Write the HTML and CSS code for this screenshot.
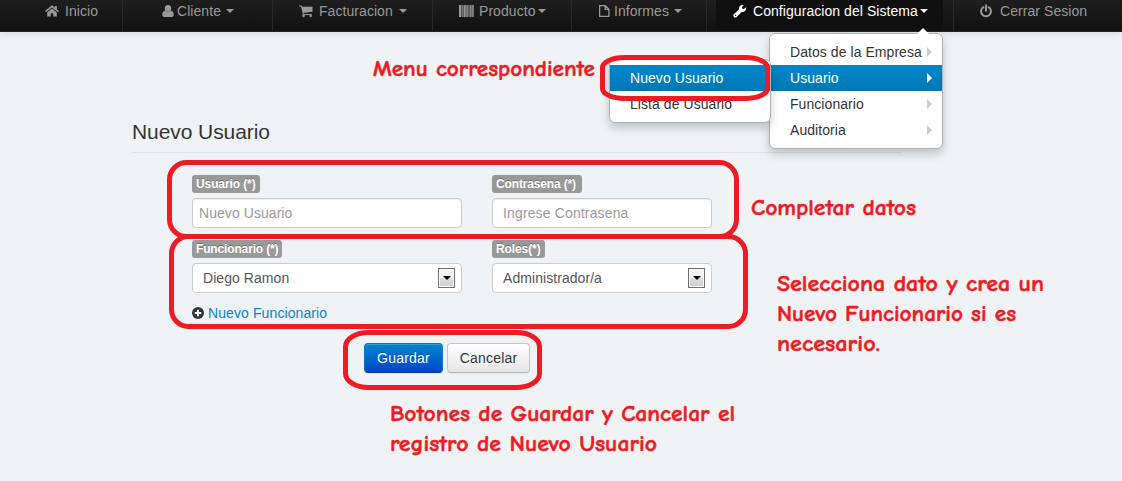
FILE: index.html
```html
<!DOCTYPE html>
<html lang="es">
<head>
<meta charset="utf-8">
<title>Nuevo Usuario</title>
<link rel="stylesheet" href="styles.css">
</head>
<body>
<nav class="navbar">
  <a class="nav-item nav-home"><svg class="icon" viewBox="0 0 14 14"><path d="M7 4.400 2.200 8.400V12.500H5.800V9.300h2.400v3.200h3.600V8.400zM7 1.200 0 7.100l1 1.200L7 3.400l6 4.900 1-1.200-2.100-1.700V2H9.800v1.600z"/></svg><span>Inicio</span></a>
  <a class="nav-item nav-client"><svg class="icon" viewBox="0 0 12 14"><path d="M6 1a3.200 3.400 0 1 1 0 6.800A3.200 3.400 0 0 1 6 1M3 6.700C1 6.900.3 8.500.3 11c0 1.300.8 2 2 2h7.400c1.200 0 2-.7 2-2 0-2.500-.7-4.100-2.700-4.300C7.500 8.500 4.500 8.500 3 6.700"/></svg><span>Cliente</span><i class="caret"></i></a>
  <a class="nav-item nav-billing"><svg class="icon" viewBox="0 0 14 14"><path d="M0 1.500h2.800l.4 1.300H13.500v5L4.500 9l.2.900h8v1.100H3.600L3.700 9.500 2 2.600H0z"/><circle cx="4.600" cy="12" r="1.200"/><circle cx="11.700" cy="12" r="1.200"/></svg><span>Facturacion</span><i class="caret"></i></a>
  <a class="nav-item nav-product"><svg class="icon" viewBox="0 0 15 14"><path d="M0 1h2v12H0zm2.600 0h1.200v12H2.600zm1.900 0h2.200v12H4.500zm2.800 0h1.500v12H7.300zm2.200 0h1v12h-1zm1.600 0h1.500v12h-1.500zm2.100 0h1.500v12h-1.500z"/></svg><span>Producto</span><i class="caret"></i></a>
  <a class="nav-item nav-reports"><svg class="icon" viewBox="0 0 11 14"><path class="line" d="M.6 1.600h5.700l3.600 3.600v7.200H.6zM6.200 1.600v3.700h3.700"/></svg><span>Informes</span><i class="caret"></i></a>
  <a class="nav-item nav-config"><svg class="icon" viewBox="0 0 14 14"><path fill-rule="evenodd" d="M.6 10.500 6 5.300C5.500 2.800 7.600.400 10.800 1.100L8.900 3.200l.4 1.500 1.600.3 2.200-1.800c.5 3.100-2 5.300-4.500 4.700L3.400 13.300C1.700 14.200-.5 12.200.6 10.500m1.200.7a.7.700 0 1 0 1.400 0 .7.700 0 1 0-1.400 0"/></svg><span>Configuracion del Sistema</span><i class="caret"></i></a>
  <a class="nav-item nav-exit"><svg class="icon" viewBox="0 0 12 14"><path class="power" d="M3.400 3.200a4.900 4.900 0 1 0 5.200 0M6 1.300v5.500"/></svg><span>Cerrar Sesion</span></a>
</nav>

<main class="content">
  <h1 class="legend">Nuevo Usuario</h1>
  <form class="form">
    <div class="field wide"><label class="tag">Usuario (*)</label><input class="control" type="text" placeholder="Nuevo Usuario"></div>
    <div class="field"><label class="tag tag-long">Contrasena (*)</label><input class="control indent" type="text" placeholder="Ingrese Contrasena"></div>
    <div class="field wide"><label class="tag tag-long">Funcionario (*)</label><div class="control select">Diego Ramon<span class="select-button"></span></div></div>
    <div class="field"><label class="tag">Roles(*)</label><div class="control select">Administrador/a<span class="select-button"></span></div></div>
  </form>
  <a class="add-link"><svg class="plus" viewBox="0 0 12 12"><circle cx="6" cy="6" r="6"/><path d="M6 2.800v6.400M2.800 6h6.400"/></svg><span>Nuevo Funcionario</span></a>
  <div class="actions"><button class="btn primary">Guardar</button><button class="btn cancel">Cancelar</button></div>
</main>

<div class="menu main-menu">
  <div class="menu-item">Datos de la Empresa<i class="arrow"></i></div>
  <div class="menu-item active">Usuario<i class="arrow"></i></div>
  <div class="menu-item">Funcionario<i class="arrow"></i></div>
  <div class="menu-item">Auditoria<i class="arrow"></i></div>
</div>
<div class="menu sub-menu">
  <div class="menu-item active">Nuevo Usuario</div>
  <div class="menu-item">Lista de Usuario</div>
</div>

<svg class="notes" viewBox="0 0 1122 481">
  <g class="outline">
    <rect x="602.500" y="57.500" width="165" height="41" rx="22" ry="10"/>
    <rect x="169.500" y="162.500" width="567" height="74" rx="17"/>
    <rect x="171.500" y="236.500" width="574" height="90" rx="17"/>
    <rect x="345.500" y="332.500" width="194" height="55" rx="23" ry="14"/>
  </g>
  <g class="note">
    <text x="373" y="75.500" textLength="222" lengthAdjust="spacingAndGlyphs">Menu correspondiente</text>
    <text x="751" y="214.500" textLength="165" lengthAdjust="spacingAndGlyphs">Completar datos</text>
    <text x="777" y="290.500" textLength="267" lengthAdjust="spacingAndGlyphs">Selecciona dato y crea un</text>
    <text x="777" y="320.500" textLength="239" lengthAdjust="spacingAndGlyphs">Nuevo Funcionario si es</text>
    <text x="777" y="350.500" textLength="103" lengthAdjust="spacingAndGlyphs">necesario.</text>
    <text x="390" y="420.500" textLength="345" lengthAdjust="spacingAndGlyphs">Botones de Guardar y Cancelar el</text>
    <text x="390" y="450.500" textLength="267" lengthAdjust="spacingAndGlyphs">registro de Nuevo Usuario</text>
  </g>
</svg>
</body>
</html>
```
FILE: styles.css
```css
* { box-sizing: border-box; }
body {
  margin: 0;
  width: 1122px;
  height: 481px;
  overflow: hidden;
  position: relative;
  background: #eff3f6;
  color: #333;
  font: 14px/20px Arial, "Liberation Sans", sans-serif;
  letter-spacing: .06px;
}

/* Navigation */
.navbar {
  position: relative;
  display: flex;
  height: 32px;
  background: linear-gradient(#1e1e1e, #111);
  border-bottom: 1px solid #252525;
  box-shadow: 0 1px 10px rgba(0, 0, 0, .12);
}
.nav-item {
  display: flex;
  align-items: center;
  height: 31px;
  padding-bottom: 9px;
  color: #999;
  white-space: nowrap;
  border-right: 1px solid #282828;
}
.icon { height: 14px; flex: none; fill: currentColor; }
.line { fill: none; stroke: currentColor; stroke-width: 1.3; }
.power { fill: none; stroke: currentColor; stroke-width: 2; stroke-linecap: round; }
.caret {
  border: 4px solid transparent;
  border-top-color: currentColor;
  border-bottom: 0;
  margin-left: 5px;
}
.nav-home { width: 123px; padding-left: 45px; }
.nav-home .icon { width: 14px; margin-right: 6px; }
.nav-client { width: 150px; padding-left: 39px; }
.nav-client .icon { width: 12px; margin-right: 3px; }
.nav-billing { width: 160px; padding-left: 26px; }
.nav-billing .icon { width: 14px; margin-right: 6px; }
.nav-billing .caret { margin-left: 6px; }
.nav-product { width: 139px; padding-left: 26px; }
.nav-product .icon { width: 15px; margin-right: 5px; }
.nav-product .caret { margin-left: 2px; }
.nav-reports { width: 135px; padding-left: 27px; }
.nav-reports .icon { width: 11px; margin-right: 4px; }
.nav-config {
  width: 247px;
  padding-left: 26px;
  color: #fff;
  background: linear-gradient(#0f0f0f, #0f0f0f) 9px 0 / 227px 31px no-repeat;
}
.nav-config .icon { width: 14px; margin-right: 6px; }
.nav-config .caret { margin-left: 2px; }
.nav-exit { padding-left: 26px; border: 0; }
.nav-exit .icon { width: 12px; margin-right: 8px; }

/* Form */
.content { width: 770px; margin-left: 132px; padding-top: 80px; }
.legend {
  margin: 0;
  height: 41px;
  font-size: 21px;
  font-weight: 400;
  line-height: 40px;
  letter-spacing: -.08px;
  border-bottom: 1px solid #e0e3e6;
}
.form {
  display: grid;
  grid-template-columns: 270px 220px;
  column-gap: 30px;
  row-gap: 12px;
  padding: 22px 0 0 60px;
}
.field { display: flex; flex-direction: column; align-items: flex-start; height: 53px; }
.tag {
  height: 18px;
  padding: 0 4px;
  margin-bottom: 5px;
  border-radius: 3px;
  background: #999;
  color: #fff;
  font-size: 12px;
  font-weight: 700;
  line-height: 18px;
  letter-spacing: -.1px;
  text-shadow: 0 -1px 0 rgba(0, 0, 0, .25);
}
.tag-long { width: 90px; letter-spacing: -.15px; white-space: nowrap; }
.control {
  width: 100%;
  height: 30px;
  padding: 4px 6px;
  border: 1px solid #ccc;
  border-radius: 4px;
  background: #fff;
  color: #555;
  font: inherit;
  letter-spacing: inherit;
  box-shadow: inset 0 1px 1px rgba(0, 0, 0, .075);
}
.control::placeholder { color: #999; opacity: 1; }
.indent { padding-left: 10px; letter-spacing: .14px; }
.select {
  display: flex;
  align-items: center;
  justify-content: space-between;
  padding-left: 10px;
  box-shadow: none;
}
.select-button {
  display: flex;
  align-items: center;
  justify-content: center;
  width: 17px;
  height: 20px;
  border: 1px solid #707070;
  background: linear-gradient(#f3f3f3 50%, #ddd 50%, #cfcfcf);
  box-shadow: inset 0 0 0 1px #fafafa;
}
.select-button::after { content: ""; border: 4px solid transparent; border-top-color: #000; border-bottom: 0; }
.add-link { display: flex; align-items: center; margin: 10px 0 0 60px; color: #0a84c9; letter-spacing: .1px; }
.plus { width: 12px; height: 12px; margin-right: 4px; fill: #333; }
.plus path { stroke: #fff; stroke-width: 2; }
.actions { display: flex; gap: 4px; margin: 20px 0 0 232px; }
.btn {
  height: 30px;
  padding: 4px 0;
  border: 1px solid #c5c5c5;
  border-bottom-color: #b3b3b3;
  border-radius: 4px;
  background: linear-gradient(#fff, #e6e6e6);
  color: #333;
  font: inherit;
  letter-spacing: .2px;
  text-shadow: 0 1px 1px rgba(255, 255, 255, .75);
  box-shadow: inset 0 1px 0 rgba(255, 255, 255, .2), 0 1px 2px rgba(0, 0, 0, .05);
}
.cancel { width: 83px; }
.primary {
  width: 79px;
  color: #fff;
  border-color: #0877c8 #0877c8 #003ba8;
  background: linear-gradient(#0088cc, #0044cc);
  text-shadow: 0 -1px 0 rgba(0, 0, 0, .25);
}

/* Open menus lie over the page */
.menu {
  position: absolute;
  padding: 5px 0;
  background: #fff;
  border: 1px solid #aeb1b3;
  border-radius: 6px;
  box-shadow: 0 5px 10px rgba(0, 0, 0, .2);
}
.main-menu { left: 769px; top: 33px; width: 174px; }
.main-menu::before {
  content: "";
  position: absolute;
  right: 13px;
  top: -6px;
  border: 6px solid transparent;
  border-top: 0;
  border-bottom-color: #fff;
}
.sub-menu { left: 609px; top: 59px; width: 162px; }
.menu-item {
  display: flex;
  align-items: center;
  justify-content: space-between;
  height: 26px;
  padding: 0 10px 0 20px;
  white-space: nowrap;
}
.menu-item.active { color: #fff; background: linear-gradient(#0088cc, #0077b3); }
.arrow { border: 5px solid transparent; border-left-color: #ccc; border-right: 0; }
.active .arrow { border-left-color: #fff; }

/* Red annotations */
.notes { position: absolute; left: 0; top: 0; width: 1122px; height: 481px; pointer-events: none; }
.outline { fill: none; stroke: #ed1c24; stroke-width: 5; }
.note {
  fill: #ed1c24;
  stroke: #ed1c24;
  stroke-width: .5;
  letter-spacing: 0;
  font: 700 23px "Comic Sans MS", "Comic Neue", Lato, sans-serif;
}
```
